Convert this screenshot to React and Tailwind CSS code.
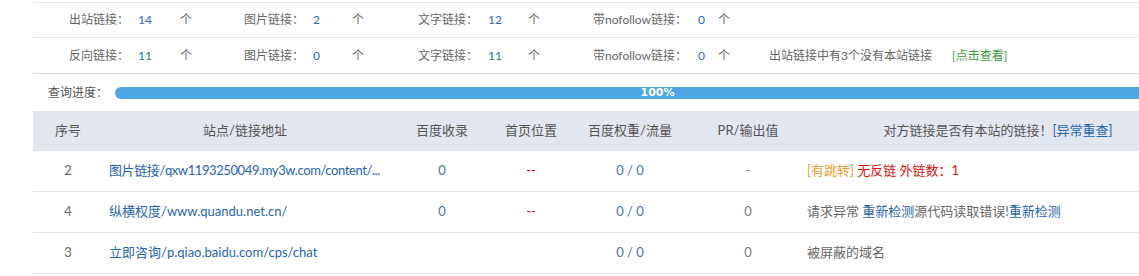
import React from "react";

const font = { fontFamily: '"Lato", "Noto Sans CJK SC", sans-serif' };

function Group({ label, num, lw, nw, gw }) {
  return (
    <div className="flex items-center">
      <span className={`${lw} text-[#666]`}>{label}</span>
      <span className={`${nw} text-[#2b6cb0]`}>{num}</span>
      <span className={`${gw} text-[#666]`}>个</span>
    </div>
  );
}

export default function App() {
  const rows1 = [
    { label: "出站链接：", num: "14", lw: "w-[69px]", nw: "w-[42px]", gw: "w-[64px]" },
    { label: "图片链接：", num: "2", lw: "w-[69px]", nw: "w-[39px]", gw: "w-[66px]" },
    { label: "文字链接：", num: "12", lw: "w-[70px]", nw: "w-[40px]", gw: "w-[65px]" },
    { label: "带nofollow链接：", num: "0", lw: "w-[105px]", nw: "w-[20px]", gw: "w-[51px]" },
  ];
  const rows2 = [
    { label: "反向链接：", num: "11", lw: "w-[69px]", nw: "w-[42px]", gw: "w-[64px]" },
    { label: "图片链接：", num: "0", lw: "w-[69px]", nw: "w-[39px]", gw: "w-[66px]" },
    { label: "文字链接：", num: "11", lw: "w-[70px]", nw: "w-[40px]", gw: "w-[65px]" },
    { label: "带nofollow链接：", num: "0", lw: "w-[105px]", nw: "w-[20px]", gw: "w-[51px]" },
  ];
  const cols = "grid grid-cols-[70px_284px_110px_68px_130px_106px_394px]";
  return (
    <div className="w-[1139px] h-[276px] overflow-hidden bg-white" style={font}>
      <div className="w-[1200px] pl-[33px] pt-[2px]">
        <div className="border-t border-[#e8e8e8]">
          <div className="h-[35px] flex items-center pl-[36px] border-b border-[#e6e6e6] text-[12px]">
            {rows1.map((g, i) => (
              <Group key={i} {...g} />
            ))}
          </div>
          <div className="h-[36px] flex items-center pl-[36px] border-b border-[#d6d6d6] text-[12px]">
            {rows2.map((g, i) => (
              <Group key={i} {...g} />
            ))}
            <span className="text-[#666]">出站链接中有3个没有本站链接</span>
            <span className="ml-[20px] text-[#3d9a3d]">[点击查看]</span>
          </div>
        </div>
        <div className="h-[37px] flex items-center pl-[15px] text-[12px]">
          <span className="w-[68px] text-[#555]">查询进度：</span>
          <div className="w-[1100px] h-[12px] rounded-l-full bg-[#4ea6e2] flex items-center justify-center">
            <span className="text-white font-bold text-[11px] leading-none" style={{ fontFamily: '"DejaVu Sans", "Liberation Sans", sans-serif' }}>100%</span>
          </div>
        </div>
        <div className={`${cols} h-[40px] items-center bg-[#e2e6ee] text-[13px] text-[#555]`}>
          <div className="text-center">序号</div>
          <div className="text-center">站点/链接地址</div>
          <div className="text-center">百度收录</div>
          <div className="text-center">首页位置</div>
          <div className="text-center">百度权重/流量</div>
          <div className="text-center">PR/输出值</div>
          <div className="text-center">
            对方链接是否有本站的链接！<span className="text-[#1f64b0]">[异常重查]</span>
          </div>
        </div>
        <div className={`${cols} h-[41px] items-center border-b border-[#e6e6e6] text-[13px]`}>
          <div className="text-center text-[#666]">2</div>
          <div className="pl-[6px] text-[#1f64b0] whitespace-nowrap tracking-[-0.4px]">图片链接/qxw1193250049.my3w.com/content/...</div>
          <div className="text-center text-[#4a74a8]">0</div>
          <div className="text-center text-[#cc0000]">--</div>
          <div className="text-center text-[#4a74a8]">0 / 0</div>
          <div className="text-center text-[#888]">-</div>
          <div className="pl-[6px]">
            <span className="text-[#f0a030]">[有跳转]</span>{" "}
            <span className="text-[#dd1111]">无反链 外链数：1</span>
          </div>
        </div>
        <div className={`${cols} h-[41px] items-center border-b border-[#e6e6e6] text-[13px]`}>
          <div className="text-center text-[#666]">4</div>
          <div className="pl-[6px] text-[#1f64b0] whitespace-nowrap overflow-hidden">纵横权度/www.quandu.net.cn/</div>
          <div className="text-center text-[#4a74a8]">0</div>
          <div className="text-center text-[#cc0000]">--</div>
          <div className="text-center text-[#4a74a8]">0 / 0</div>
          <div className="text-center text-[#777]">0</div>
          <div className="pl-[6px] text-[#666]">
            请求异常 <span className="text-[#1f64b0]">重新检测</span>源代码读取错误!<span className="text-[#1f64b0]">重新检测</span>
          </div>
        </div>
        <div className={`${cols} h-[41px] items-center border-b border-[#e6e6e6] text-[13px]`}>
          <div className="text-center text-[#666]">3</div>
          <div className="pl-[6px] text-[#1f64b0] whitespace-nowrap overflow-hidden">立即咨询/p.qiao.baidu.com/cps/chat</div>
          <div></div>
          <div></div>
          <div className="text-center text-[#4a74a8]">0 / 0</div>
          <div className="text-center text-[#777]">0</div>
          <div className="pl-[6px] text-[#666]">被屏蔽的域名</div>
        </div>
      </div>
    </div>
  );
}
